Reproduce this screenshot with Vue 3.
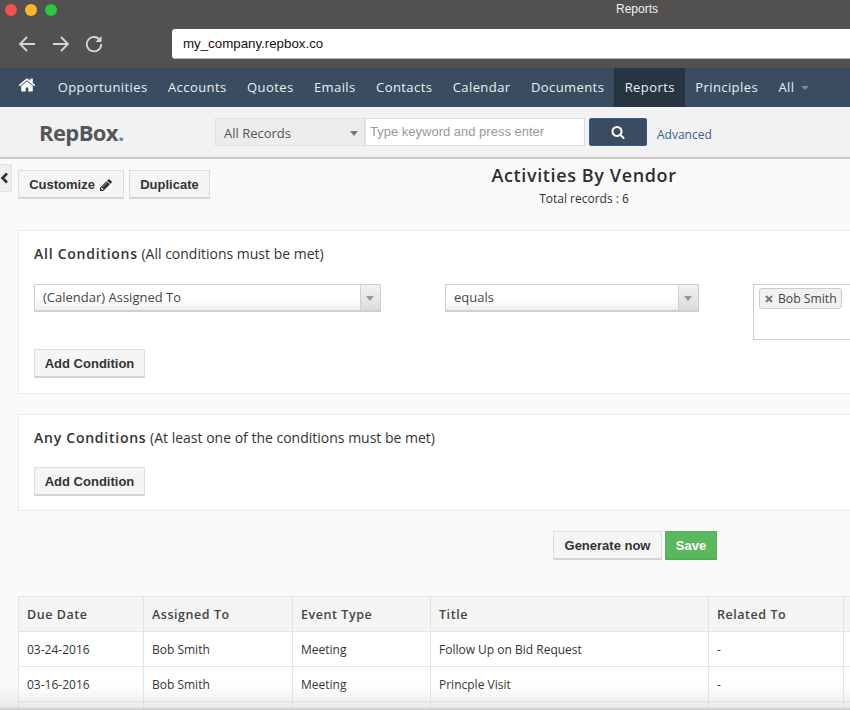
<script setup>
const navItems = ['Opportunities', 'Accounts', 'Quotes', 'Emails', 'Contacts', 'Calendar', 'Documents', 'Reports', 'Principles']
const rows = [
  ['03-24-2016', 'Bob Smith', 'Meeting', 'Follow Up on Bid Request', '-', ''],
  ['03-16-2016', 'Bob Smith', 'Meeting', 'Princple Visit', '-', ''],
  ['', '', '', '', '', ''],
]
const heads = ['Due Date', 'Assigned To', 'Event Type', 'Title', 'Related To', '']
</script>

<template>
  <div class="window">
    <header class="chrome">
      <div class="titlebar">
        <div class="lights">
          <span class="light red"></span><span class="light yellow"></span><span class="light green"></span>
        </div>
        <span class="win-title">Reports</span>
      </div>
      <div class="urlrow">
        <div class="browser-nav">
          <svg width="18" height="18" viewBox="0 0 18 18" class="bi"><path d="M17 9H2M9 2 2 9l7 7" /></svg>
          <svg width="18" height="18" viewBox="0 0 18 18" class="bi"><path d="M1 9h15M9 2l7 7-7 7" /></svg>
          <svg width="18" height="18" viewBox="0 0 18 18" class="bi"><path d="M15.2 5.500A7.200 7.200 0 1 0 16.200 9" /><path class="fill" d="M16.500 1v6h-6z" /></svg>
        </div>
        <div class="url">my_company.repbox.co</div>
      </div>
    </header>

    <nav class="mainnav">
      <span class="home">
        <svg width="18" height="18" viewBox="0 0 1792 1792"><path fill="#fff" d="M1472 992v480q0 26-19 45t-45 19h-384v-384H768v384H384q-26 0-45-19t-19-45V992q0-1 .5-3t.5-3l575-474 575 474q1 2 1 6zm223-69l-62 74q-8 9-21 11h-3q-13 0-21-7L896 424l-692 577q-12 8-24 7-13-2-21-11l-62-74q-8-10-7-23.500t11-21.500l719-599q32-26 76-26t76 26l244 204V288q0-14 9-23t23-9h192q14 0 23 9t9 23v408l219 182q10 8 11 21.500t-7 23.500z"/></svg>
      </span>
      <a v-for="n in navItems" :key="n" class="navlink" :class="{ active: n === 'Reports' }">{{ n }}</a>
      <a class="navlink all">All <i class="nav-caret"></i></a>
    </nav>

    <div class="searchbar">
      <div class="logo">RepBox<span class="dot">.</span></div>
      <div class="record-select">All Records<i class="caret"></i></div>
      <div class="keyword">Type keyword and press enter</div>
      <button class="search-btn">
        <svg width="14" height="14" viewBox="0 0 1792 1792"><path fill="#fff" d="M1216 832q0-185-131.500-316.500T768 384 451.500 515.500 320 832t131.500 316.500T768 1280t316.500-131.500T1216 832zm512 832q0 52-38 90t-90 38q-54 0-90-38l-343-342q-179 124-399 124-143 0-273.500-55.500t-225-150-150-225T64 832t55.500-273.500 150-225 225-150T768 128t273.500 55.500 225 150 150 225T1472 832q0 220-124 399l343 343q37 37 37 90z"/></svg>
      </button>
      <a class="advanced">Advanced</a>
    </div>

    <main class="content">
      <div class="collapse-tab">
        <svg width="9" height="12" viewBox="0 0 9 12"><path d="M7 1.500 2.500 6 7 10.500" fill="none" stroke="#333" stroke-width="2.600"/></svg>
      </div>

      <div class="toolbar">
        <div class="tool-buttons">
          <button class="btn btn-custom">Customize
            <svg width="14" height="14" viewBox="0 0 1792 1792"><path fill="#333" d="M491 1536l91-91-235-235-91 91v107h128v128h107zm523-928q0-22-22-22-10 0-17 7l-542 542q-7 7-7 17 0 22 22 22 10 0 17-7l542-542q7-7 7-17zm-54-192l416 416-832 832H128v-416zm683 96q0 53-37 90l-166 166-416-416 166-165q36-38 90-38 53 0 91 38l235 234q37 39 37 91z"/></svg>
          </button>
          <button class="btn btn-dup">Duplicate</button>
        </div>
        <div class="report-title">
          <h1>Activities By Vendor</h1>
          <p>Total records : 6</p>
        </div>
      </div>

      <section class="card card-all">
        <h2><b>All Conditions</b> (All conditions must be met)</h2>
        <div class="cond-row">
          <div class="select wide">(Calendar) Assigned To<span class="sel-arrow"><i></i></span></div>
          <div class="select mid">equals<span class="sel-arrow"><i></i></span></div>
          <div class="tags">
            <span class="tag"><svg width="8" height="8" viewBox="0 0 8 8"><path d="M1 1l6 6M7 1 1 7" stroke="#777" stroke-width="2"/></svg>Bob Smith</span>
          </div>
        </div>
        <button class="btn btn-add">Add Condition</button>
      </section>

      <section class="card card-any">
        <h2><b>Any Conditions</b> (At least one of the conditions must be met)</h2>
        <button class="btn btn-add">Add Condition</button>
      </section>

      <div class="actions">
        <button class="btn btn-gen">Generate now</button>
        <button class="btn save">Save</button>
      </div>

      <div class="table">
        <div v-for="(h, i) in heads" :key="'h' + i" class="cell head">{{ h }}</div>
        <template v-for="(r, ri) in rows" :key="ri">
          <div v-for="(c, ci) in r" :key="ci" class="cell">{{ c }}</div>
        </template>
      </div>
      <div class="bottom-fade"></div>
    </main>
  </div>
</template>

<style scoped>
.window {
  position: relative;
  width: 850px;
  height: 710px;
  overflow: hidden;
  background: #fafafa;
  font-family: "Open Sans", sans-serif;
  color: #333;
  display: flex;
  flex-direction: column;
}
.chrome {
  height: 68px;
  flex: none;
  background: #535050;
}
.titlebar {
  height: 19px;
  position: relative;
  display: flex;
  align-items: center;
  padding-left: 5px;
}
.lights {
  display: flex;
  gap: 8px;
}
.light {
  width: 12px;
  height: 12px;
  border-radius: 50%;
}
.red { background: #f4504f; }
.yellow { background: #fbb92a; }
.green { background: #28c840; }
.win-title {
  position: absolute;
  left: 616px;
  top: 1px;
  font: 12px/16px "Liberation Sans", sans-serif;
  color: #f2f2f2;
}
.urlrow {
  display: flex;
  align-items: flex-start;
  padding: 10px 0 0 18px;
}
.browser-nav {
  display: flex;
  gap: 15.500px;
  padding-top: 6px;
  width: 154px;
  flex: none;
}
.bi {
  fill: none;
  stroke: #d6d6d6;
  stroke-width: 1.800;
}
.bi .fill {
  fill: #d6d6d6;
  stroke: none;
}
.url {
  flex: 1;
  height: 30px;
  box-sizing: border-box;
  background: #fff;
  border-bottom: 1px solid #bbb;
  border-radius: 3px 0 0 3px;
  padding-left: 11px;
  font: 13.300px/30px "Liberation Sans", sans-serif;
  color: #111;
}
.mainnav {
  height: 39px;
  flex: none;
  background: #394c60;
  display: flex;
  align-items: stretch;
  padding-left: 18px;
}
.home {
  width: 29.500px;
  padding-top: 8px;
  box-sizing: border-box;
  flex: none;
}
.navlink {
  padding: 0 10.200px;
  font-size: 13px;
  line-height: 39px;
  letter-spacing: 0.420px;
  color: #eceff1;
  white-space: nowrap;
}
.navlink.active {
  background: #263541;
}
.nav-caret {
  display: inline-block;
  width: 0;
  height: 0;
  margin-left: 3px;
  border: 4px solid transparent;
  border-top: 4px solid #7f8b98;
  border-bottom: 0;
  vertical-align: 2px;
}
.searchbar {
  height: 52px;
  flex: none;
  box-sizing: border-box;
  background: #f2f2f2;
  border-bottom: 2px solid #c9c9c9;
  display: flex;
  align-items: flex-start;
  padding: 11px 0 0 39px;
}
.logo {
  width: 176px;
  flex: none;
  font-size: 22px;
  line-height: 28px;
  font-weight: 700;
  letter-spacing: -0.600px;
  color: #555658;
}
.logo .dot { color: #3f8fd0; }
.record-select {
  position: relative;
  width: 150px;
  height: 28px;
  box-sizing: border-box;
  flex: none;
  background: #ececec;
  border: 1px solid #e2e2e2;
  padding-left: 8px;
  font-size: 13px;
  line-height: 28px;
  color: #555;
}
.caret {
  position: absolute;
  right: 6px;
  top: 12px;
  border: 4px solid transparent;
  border-top: 5px solid #777;
  border-bottom: 0;
}
.keyword {
  width: 220px;
  height: 28px;
  box-sizing: border-box;
  flex: none;
  background: #fff;
  border: 1px solid #ddd;
  padding-left: 4px;
  font: 13px/26px "Liberation Sans", sans-serif;
  color: #999;
}
.search-btn {
  width: 58px;
  height: 28px;
  margin-left: 4px;
  flex: none;
  background: #394c60;
  border: 1px solid #2f5f95;
  border-radius: 2px;
  display: flex;
  align-items: center;
  justify-content: center;
  padding: 0;
}
.advanced {
  margin-left: 10px;
  font-size: 12px;
  line-height: 34px;
  color: #36608f;
}
.content {
  position: relative;
  flex: 1;
  min-height: 0;
  padding: 11px 0 0 18px;
  display: flex;
  flex-direction: column;
  align-items: flex-start;
}
.collapse-tab {
  position: absolute;
  left: 0;
  top: 5px;
  width: 12px;
  height: 28px;
  box-sizing: border-box;
  background: #efefef;
  border: 1px solid #e2e2e2;
  border-left: 0;
  display: flex;
  align-items: center;
  justify-content: flex-start;
}
.toolbar {
  display: flex;
  align-items: flex-start;
  height: 60px;
  flex: none;
  width: 832px;
}
.tool-buttons {
  display: flex;
  gap: 5px;
  flex: none;
  width: 364px;
}
.btn {
  height: 29px;
  box-sizing: border-box;
  padding: 2px 0 0;
  background: #f5f5f5;
  border: 1px solid #dcdcdc;
  border-bottom: 2px solid #d4d4d4;
  border-radius: 1px;
  font: 700 13px/24px "Liberation Sans", sans-serif;
  color: #333;
  display: inline-flex;
  align-items: center;
  justify-content: center;
  gap: 4px;
  white-space: nowrap;
}
.btn-custom { width: 106px; }
.btn-dup { width: 81px; }
.btn-add { width: 111px; }
.btn-gen { width: 109px; }
.report-title {
  width: 404px;
  flex: none;
  text-align: center;
}
.report-title h1 {
  margin: -8px 0 0;
  font-size: 18px;
  line-height: 26px;
  font-weight: 600;
  letter-spacing: 0.620px;
  color: #2f2f2f;
}
.report-title p {
  margin: 2px 0 0;
  font-size: 12px;
  line-height: 18px;
  color: #333;
}
.card {
  background: #fff;
  border: 1px solid #e8e8e8;
  border-radius: 2px;
  width: 870px;
  box-sizing: border-box;
  padding: 0 15px;
  flex: none;
}
.card-all {
  height: 164px;
  padding-top: 12px;
}
.card-any {
  height: 97px;
  margin-top: 20px;
  padding-top: 12px;
}
.card h2 {
  margin: 0;
  font-size: 14px;
  line-height: 21px;
  font-weight: 400;
  color: #333;
}
.card h2 b {
  font-weight: 600;
  letter-spacing: 0.750px;
}
.card-any h2 { margin-bottom: 19px; }
.cond-row {
  display: flex;
  align-items: flex-start;
  margin-top: 20px;
  height: 65px;
}
.select {
  position: relative;
  height: 28px;
  box-sizing: border-box;
  background: linear-gradient(#fff 55%, #eee);
  border: 1px solid #cfcfcf;
  border-bottom-width: 2px;
  border-radius: 1px;
  padding-left: 8px;
  font-size: 13px;
  line-height: 25px;
  color: #444;
  flex: none;
}
.wide { width: 347px; margin-right: 64px; }
.mid { width: 254px; margin-right: 54px; }
.sel-arrow {
  position: absolute;
  right: 0;
  top: 0;
  bottom: 0;
  width: 19px;
  background: linear-gradient(#f2f2f2, #dcdcdc);
  border-left: 1px solid #cfcfcf;
}
.sel-arrow i {
  position: absolute;
  left: 5px;
  top: 11px;
  border: 4px solid transparent;
  border-top: 5px solid #999;
  border-bottom: 0;
}
.tags {
  width: 120px;
  height: 56px;
  box-sizing: border-box;
  border: 1px solid #cfcfcf;
  padding: 3px 5px;
  flex: none;
  display: flex;
  align-items: flex-start;
}
.tag {
  display: inline-flex;
  align-items: center;
  gap: 5px;
  height: 21px;
  box-sizing: border-box;
  padding: 0 4px 0 5px;
  background: #f1f1f1;
  border: 1px solid #ccc;
  border-radius: 3px;
  font-size: 12.200px;
  color: #444;
}
.actions {
  display: flex;
  gap: 3px;
  margin: 20px 0 0 535px;
  flex: none;
}
.btn.save {
  width: 52px;
  background: #5cb85c;
  border-color: #57b157;
  border-bottom-color: #4cae4c;
  color: #fff;
}
.table {
  display: grid;
  grid-template-columns: 125px 149px 138px 278px 135px 60px;
  grid-auto-rows: 35px;
  margin-top: 36px;
  flex: none;
  border-top: 1px solid #e4e4e4;
  border-left: 1px solid #e4e4e4;
  background: #fff;
  margin-left: 0;
}
.cell {
  box-sizing: border-box;
  border-right: 1px solid #e4e4e4;
  border-bottom: 1px solid #e4e4e4;
  padding-left: 8px;
  font-size: 12px;
  line-height: 36px;
  color: #333;
  white-space: nowrap;
}
.cell:nth-child(6n) { border-right: 0; }
.cell.head {
  background: #f5f5f5;
  font-size: 12.500px;
  font-weight: 600;
  letter-spacing: 0.550px;
  color: #444;
}
.bottom-fade {
  position: absolute;
  left: 0;
  right: 0;
  bottom: 0;
  height: 24px;
  background: linear-gradient(rgba(225,225,225,0), rgba(215,215,215,0.500) 88%, #c4c4c4);
  pointer-events: none;
}
</style>

<style>
body { margin: 0; }
</style>
